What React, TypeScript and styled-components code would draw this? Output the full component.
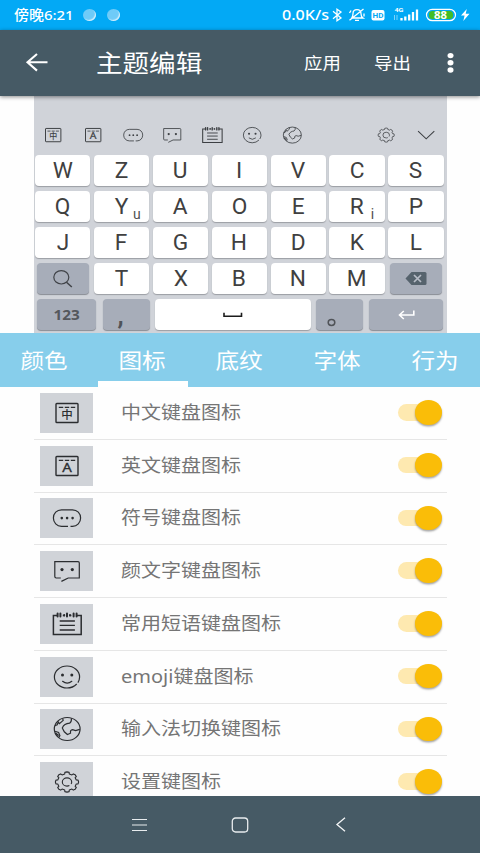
import React from 'react';
import styled, { createGlobalStyle } from 'styled-components';

const GlobalStyle = createGlobalStyle`
  * {
    box-sizing: border-box;
  }
  body {
    margin: 0;
    background: #ffffff;
    font-family: 'Noto Sans', 'Noto Sans CJK SC', sans-serif;
  }
`;

const Screen = styled.div`
  width: 480px;
  height: 853px;
  display: flex;
  flex-direction: column;
  overflow: hidden;
  background: #fefefe;
`;

// wide text: most of this screen uses a 9/8 horizontal stretch
const Wide = styled.span<{ $size: number; $origin?: string; $weight?: number; $scale?: number }>`
  display: block;
  white-space: nowrap;
  font-size: ${({ $size }) => $size}px;
  font-weight: ${({ $weight }) => $weight ?? 400};
  line-height: 1;
  transform: scaleX(${({ $scale }) => $scale ?? 1.125});
  transform-origin: ${({ $origin }) => $origin ?? 'left'} center;
`;

/* ---------- status bar ---------- */

const StatusBar = styled.div`
  height: 30px;
  flex: none;
  display: flex;
  align-items: center;
  justify-content: space-between;
  padding: 0 10px 0 14px;
  background: #03a9f5;
  color: #ffffff;
`;

const StatusLeft = styled.div`
  display: flex;
  align-items: center;
  gap: 11px;
`;

const Clock = styled.div`
  width: 58px;
  padding-top: 2px;
`;

const Bubble = styled.span`
  width: 13px;
  height: 12px;
  border-radius: 50%;
  background: #6fcbf8;
  box-shadow: inset -1px -1px 1px #d6f0fd;
`;

const StatusRight = styled.div`
  display: flex;
  align-items: center;
`;

const Speed = styled.div`
  width: 48.5px;
  padding-top: 1px;
`;

/* ---------- header ---------- */

const Header = styled.header`
  height: 66px;
  flex: none;
  display: flex;
  align-items: center;
  padding: 0 26px 0 25px;
  background: #465a65;
  color: #ffffff;
  box-shadow: 0 1px 4px rgba(0, 0, 0, 0.45);
  z-index: 1;
`;

const HeaderTitle = styled.div`
  flex: 1;
  margin-left: 48px;
  padding-top: 2px;
`;

const HeaderAction = styled.div`
  width: 69.5px;
`;

/* ---------- keyboard ---------- */

const Keyboard = styled.section`
  width: 413.5px;
  height: 237px;
  flex: none;
  margin-left: 33.5px;
  padding: 20px 2px 0 1.5px;
  background: #d0d3d9;
`;

const Toolbar = styled.div`
  height: 39px;
  display: flex;
  align-items: center;
  padding: 0 7.5px 0 6.8px;
`;

const ToolSlot = styled.div<{ $push?: boolean }>`
  width: 22.4px;
  height: 18.2px;
  margin-right: 17.5px;
  margin-left: ${({ $push }) => ($push ? 'auto' : '0')};
  color: #3c3f43;

  &:last-child {
    margin-right: 0;
  }
`;

const KeyRow = styled.div`
  display: flex;
  gap: 3.6px;
  height: 31px;
  margin-bottom: 5px;
`;

const Key = styled.div<{ $width?: number; $gray?: boolean; $left?: number; $right?: number }>`
  position: relative;
  width: ${({ $width }) => $width ?? 55.3}px;
  margin-left: ${({ $left }) => $left ?? 0}px;
  margin-right: ${({ $right }) => $right ?? 0}px;
  flex: none;
  display: flex;
  align-items: center;
  justify-content: center;
  border-radius: 4px;
  background: ${({ $gray }) => ($gray ? '#a7adb9' : '#ffffff')};
  box-shadow: 0 1px 1px ${({ $gray }) => ($gray ? '#888c94' : '#9b9ea4')};
  color: #404040;
  font-family: Roboto, sans-serif;
`;

const KeyHint = styled.span`
  position: absolute;
  left: 37px;
  bottom: 0;
  width: 12px;
  text-align: center;
  font-size: 14px;
  line-height: 16px;
  color: #505050;
`;

const NumberLabel = styled(Wide)`
  color: #55585d;
  font-family: 'Noto Sans', sans-serif;
`;

const Comma = styled.span`
  position: relative;
  left: -6px;
  top: 1px;
  font-size: 25px;
  font-weight: 700;
  line-height: 1;
  color: #505358;
`;

/* ---------- tabs ---------- */

const Tabs = styled.nav`
  width: 488px;
  height: 54px;
  flex: none;
  display: grid;
  grid-template-columns: repeat(5, 1fr);
  margin-left: -4.5px;
  background: #87ceeb;
  color: #ffffff;
`;

const Tab = styled.div<{ $active?: boolean }>`
  display: flex;
  align-items: center;
  justify-content: center;
  position: relative;

  &::after {
    content: '';
    display: ${({ $active }) => ($active ? 'block' : 'none')};
    position: absolute;
    left: 4.9px;
    bottom: 0;
    width: 90px;
    height: 6px;
    background: #ffffff;
  }
`;

/* ---------- list ---------- */

const List = styled.main`
  flex: 1;
  min-height: 0;
  overflow: hidden;
  padding: 0 33.5px;
`;

const Row = styled.div`
  height: 52.75px;
  display: flex;
  align-items: center;
  padding: 0 4.5px 0 6.5px;
  border-bottom: 1px solid #e6e6e6;
`;

const Chip = styled.div`
  width: 53.3px;
  height: 40px;
  display: flex;
  align-items: center;
  justify-content: center;
  background: #d0d3d8;
  color: #2b2d30;
`;

const Glyph = styled.svg`
  display: block;
  width: 100%;
  height: 100%;
  fill: none;
  stroke: currentColor;
`;

const GlyphBox = styled.div`
  width: 32px;
  height: 26px;
`;

const RowLabel = styled.div`
  flex: 1;
  margin-left: 28.2px;
  color: #757575;
`;

const Switch = styled.div`
  width: 43.7px;
  height: 25px;
  display: flex;
  align-items: center;
  margin-bottom: 1px;
`;

const Track = styled.div`
  width: 36px;
  height: 16.5px;
  border-radius: 9px;
  background: #fee9b0;
`;

const Thumb = styled.div`
  width: 26.6px;
  height: 24.5px;
  margin-left: -19px;
  flex: none;
  border-radius: 50%;
  background: #fabd08;
  box-shadow: 0 1.5px 2px rgba(0, 0, 0, 0.35);
`;

/* ---------- system navigation ---------- */

const NavBar = styled.footer`
  height: 57px;
  flex: none;
  display: flex;
  align-items: center;
  justify-content: center;
  gap: 84px;
  padding-right: 1px;
  background: #465a65;
`;

type IconName = 'chinese' | 'english' | 'symbol' | 'kaomoji' | 'phrase' | 'emoji' | 'globe' | 'gear' | 'down';

const gearPath = () => {
  const steps: string[] = [];
  for (let i = 0; i < 8; i++) {
    const base = (i * Math.PI) / 4;
    [
      [-0.24, 0.83],
      [-0.19, 0.98],
      [0, 1.01],
      [0.19, 0.98],
      [0.24, 0.83],
    ].forEach(([a, r]) => {
      const x = 16 + Math.sin(base + a) * r * 11.5;
      const y = 13 - Math.cos(base + a) * r * 10;
      steps.push(`${x.toFixed(2)} ${y.toFixed(2)}`);
    });
  }
  return `M${steps.join('L')}Z`;
};

const Icon: React.FC<{ name: IconName }> = ({ name }) => (
  <Glyph viewBox="0 0 32 26" strokeWidth="1.2">
    {(name === 'chinese' || name === 'english') && (
      <>
        <rect x="5" y="3.5" width="22" height="19" rx="0.8" strokeWidth="1.4" />
        <path d="M7.8 7.3h4.4M13.8 7.3h4.4M19.8 7.3h4.4" />
      </>
    )}
    {name === 'chinese' && (
      <text
        x="16"
        y="18.5"
        textAnchor="middle"
        fontSize="11.5"
        fontWeight="500"
        fontFamily="'Noto Sans CJK SC', sans-serif"
        fill="currentColor"
        stroke="none"
      >
        中
      </text>
    )}
    {name === 'english' && (
      <text
        x="13.3"
        y="19.2"
        textAnchor="middle"
        fontSize="12.5"
        fontFamily="'Noto Sans', sans-serif"
        fill="currentColor"
        stroke="currentColor"
        strokeWidth="0.3"
        transform="scale(1.2 1)"
      >
        A
      </text>
    )}
    {name === 'symbol' && (
      <>
        <path d="M17 21.3H10.5C5.8 21.3 2.4 17.6 2.4 13S5.8 4.8 10.5 4.8h11c4.7 0 8.1 3.6 8.1 8.2s-3.4 8.3-8.1 8.3h-2" />
        <g fill="currentColor" stroke="none">
          <circle cx="10.8" cy="13.1" r="1.3" />
          <circle cx="16.1" cy="13.1" r="1.3" />
          <circle cx="21.6" cy="13.1" r="1.3" />
        </g>
      </>
    )}
    {name === 'kaomoji' && (
      <>
        <path d="M9.8 20H5.2q-1.4 0-1.4-1.4V3.6H27q1.3 0 1.3 1.4v15H17.2L10.4 23.4" />
        <g fill="currentColor" stroke="none">
          <circle cx="11" cy="11.6" r="1.6" />
          <circle cx="21.3" cy="11.6" r="1.6" />
        </g>
      </>
    )}
    {name === 'phrase' && (
      <>
        <path strokeWidth="1.5" d="M6.8 4.4H2.4V23.6H30.2V4.4H25.7M11.8 4.4h2M18.4 4.4h2" />
        <path strokeWidth="2" strokeLinecap="round" d="M9.4 2.6v3M13.2 4v.4M16 2.6v3M19 4v.4M22.6 2.6v3M6.6 2.6v3M25.6 2.6v3" />
        <path strokeWidth="1.3" d="M8.7 10h15.2M8.7 14.4h15.2M8.7 19h15.2" />
      </>
    )}
    {name === 'emoji' && (
      <>
        <ellipse cx="16" cy="13" rx="12.6" ry="11" pathLength="100" strokeDasharray="8 2.5 89.5 0" />
        <path strokeLinecap="round" d="M11.6 17.3q4.6 3.8 9.2 0" />
        <g fill="currentColor" stroke="none">
          <circle cx="11.5" cy="11" r="1.5" />
          <circle cx="20.8" cy="11" r="1.5" />
        </g>
      </>
    )}
    {name === 'globe' && (
      <>
        <ellipse cx="16.2" cy="13" rx="12.9" ry="11.5" />
        <path d="M20.4 2.2Q20.8 5.6 18.6 7.2C15.5 7.4 12.5 9 11.3 11.9L13.3 15.8 16.4 18.5 19.5 17.2Q19 13.9 21.6 13.7L24.6 14.6 28.8 13.4" />
        <path d="M6.6 5.2 8.4 7.6 12.2 4.4 11.6 2.4M3.8 9.8 6.2 8.8 7.2 6.2M4 15.2 7.6 16.4 8.9 19.6 7.8 21.4" />
        <path strokeWidth="1.6" d="M4.4 17 7.6 19.6" />
      </>
    )}
    {name === 'gear' && (
      <>
        <path strokeWidth="1.1" strokeLinejoin="round" d={gearPath()} />
        <ellipse cx="16" cy="13" rx="4.7" ry="4.1" strokeWidth="1.1" pathLength="100" strokeDasharray="8 8 84 0" />
      </>
    )}
    {name === 'down' && <path strokeWidth="1.5" d="M4.4 7.4 16 18.4 27.6 7.4" />}
  </Glyph>
);

const letterRows = ['WZUIVCS', 'QYAOERP', 'JFGHDKL'];
const hints: Record<string, string> = { Y: 'u', R: 'i' };
const tools: IconName[] = ['chinese', 'english', 'symbol', 'kaomoji', 'phrase', 'emoji', 'globe'];
const tabs = ['颜色', '图标', '底纹', '字体', '行为'];

const items: { icon: IconName; label: string }[] = [
  { icon: 'chinese', label: '中文键盘图标' },
  { icon: 'english', label: '英文键盘图标' },
  { icon: 'symbol', label: '符号键盘图标' },
  { icon: 'kaomoji', label: '颜文字键盘图标' },
  { icon: 'phrase', label: '常用短语键盘图标' },
  { icon: 'emoji', label: 'emoji键盘图标' },
  { icon: 'globe', label: '输入法切换键图标' },
  { icon: 'gear', label: '设置键图标' },
];

const LetterKey: React.FC<{ letter: string }> = ({ letter }) => (
  <Key>
    <Wide $size={22} $origin="center" $scale={1.03}>
      {letter}
    </Wide>
    {hints[letter] && <KeyHint>{hints[letter]}</KeyHint>}
  </Key>
);

const StatusIcons: React.FC = () => (
  <svg width="140" height="20" viewBox="330 5 140 20" fill="none" stroke="#fff">
    <path strokeWidth="1.3" d="M333 11.3 341 18 337 20.8V9.2L341 12 333 18.7" />
    <path
      strokeWidth="1.3"
      d="M351.5 18H363c-1.6-1-2-2.2-2-4.3 0-2.6-1.5-4-4-4s-4 1.4-4 4c0 2-.3 3.3-1.5 4.3M355 20.3h4M349.5 20.3 363.5 9M349.5 13l1.5-2.5M364 13.500v3"
    />
    <rect x="371.5" y="10" width="13" height="10.5" rx="2" fill="#fff" stroke="none" />
    <text x="378" y="18.3" textAnchor="middle" fontSize="8" fontWeight="700" fontFamily="Roboto, sans-serif" fill="#03a9f5" stroke="none">
      HD
    </text>
    <text
      x="394.5"
      y="12"
      fontSize="6"
      fontWeight="700"
      fontFamily="Roboto, sans-serif"
      fill="#fff"
      stroke="none"
      textLength="9"
      lengthAdjust="spacingAndGlyphs"
    >
      4G
    </text>
    <path strokeWidth="0.7" opacity="0.7" d="M394.5 15v5M397 15v5" />
    <path strokeWidth="2.3" d="M401.5 18v2.5M405.3 16.5v4M409.2 14.5v6M413 12v8.5M417 9.5v11" />
    <rect x="426.5" y="9.3" width="29" height="11.4" rx="5.7" strokeWidth="1.2" />
    <rect x="429" y="11" width="24" height="8" rx="3.5" fill="#42bd26" stroke="none" />
    <text
      x="440.5"
      y="18.5"
      textAnchor="middle"
      fontSize="10"
      fontWeight="700"
      fontFamily="'Noto Sans', sans-serif"
      fill="#fff"
      stroke="none"
      textLength="13"
      lengthAdjust="spacingAndGlyphs"
    >
      88
    </text>
    <path fill="#fff" stroke="none" d="M466.8 9 461 15.600h3.600L463.300 21 469.500 13.800h-3.800z" />
  </svg>
);

const App: React.FC = () => (
  <>
    <GlobalStyle />
    <Screen>
      <StatusBar>
        <StatusLeft>
          <Clock>
            <Wide $size={13.3} $weight={500}>
              傍晚6:21
            </Wide>
          </Clock>
          <Bubble />
          <Bubble />
        </StatusLeft>
        <StatusRight>
          <Speed>
            <Wide $size={14.3} $weight={500}>
              0.0K/s
            </Wide>
          </Speed>
          <StatusIcons />
        </StatusRight>
      </StatusBar>

      <Header>
        <svg width="23" height="20" viewBox="0 0 23 20" fill="none" stroke="#fff" strokeWidth="2.1">
          <path d="M22.500 9.300H2.500M12 1 2.500 9.300l9.500 8.300" />
        </svg>
        <HeaderTitle>
          <Wide $size={23.6}>主题编辑</Wide>
        </HeaderTitle>
        <HeaderAction>
          <Wide $size={16.4}>应用</Wide>
        </HeaderAction>
        <HeaderAction>
          <Wide $size={16.4}>导出</Wide>
        </HeaderAction>
        <svg width="11" height="22" viewBox="0 0 11 22" fill="#fff">
          <ellipse cx="7.5" cy="3.6" rx="3" ry="2.7" />
          <ellipse cx="7.5" cy="10.8" rx="3" ry="2.7" />
          <ellipse cx="7.5" cy="18" rx="3" ry="2.7" />
        </svg>
      </Header>

      <Keyboard>
        <Toolbar>
          {tools.map((name) => (
            <ToolSlot key={name}>
              <Icon name={name} />
            </ToolSlot>
          ))}
          <ToolSlot $push>
            <Icon name="gear" />
          </ToolSlot>
          <ToolSlot>
            <Icon name="down" />
          </ToolSlot>
        </Toolbar>
        {letterRows.map((row) => (
          <KeyRow key={row}>
            {row.split('').map((letter) => (
              <LetterKey key={letter} letter={letter} />
            ))}
          </KeyRow>
        ))}
        <KeyRow>
          <Key $gray $width={51.8} $left={1.8} $right={1.7}>
            <svg width="20" height="18" viewBox="0 0 20 18" fill="none" stroke="#404348" strokeWidth="1.2">
              <ellipse cx="8.3" cy="7.3" rx="7.5" ry="6.7" />
              <path d="M13.5 12.3 18.8 17" strokeWidth="1.5" />
            </svg>
          </Key>
          {'TXBNM'.split('').map((letter) => (
            <LetterKey key={letter} letter={letter} />
          ))}
          <Key $gray $width={52} $left={1.8}>
            <svg width="22" height="13" viewBox="0 0 22 13">
              <path d="M6.5 0H20q1.5 0 1.5 1.5v10q0 1.5-1.5 1.5H6.5L.5 6.5z" fill="#56636d" />
              <path d="M9 3 16 10M16 3 9 10" stroke="#b7bdc7" strokeWidth="1.7" />
            </svg>
          </Key>
        </KeyRow>
        <KeyRow>
          <Key $gray $width={59.7} $left={1.8} $right={3.2}>
            <NumberLabel $size={13.6} $origin="center" $weight={700}>
              123
            </NumberLabel>
          </Key>
          <Key $gray $width={46.7} $right={1.2}>
            <Comma>,</Comma>
          </Key>
          <Key $width={156.5} $right={1.3}>
            <svg width="20" height="6" viewBox="0 0 20 6" fill="none" stroke="#1c1c1c" strokeWidth="1.6">
              <path d="M1 .8v3.400h17.500V.8" />
            </svg>
          </Key>
          <Key $gray $width={46.7} $right={3}>
            <svg width="46" height="31" viewBox="0 0 46 31" fill="none" stroke="#505358" strokeWidth="1.5">
              <ellipse cx="15.5" cy="23.5" rx="3.3" ry="2.9" />
            </svg>
          </Key>
          <Key $gray $width={74}>
            <svg width="17" height="10" viewBox="0 0 17 10" fill="none" stroke="#fff" strokeWidth="1.6">
              <path d="M15.800.5V5H1.500M5.800 1 1.500 5l4.300 4" />
            </svg>
          </Key>
        </KeyRow>
      </Keyboard>

      <Tabs>
        {tabs.map((tab) => (
          <Tab key={tab} $active={tab === '图标'}>
            <Wide $size={21} $origin="center">
              {tab}
            </Wide>
          </Tab>
        ))}
      </Tabs>

      <List>
        {items.map(({ icon, label }) => (
          <Row key={label}>
            <Chip>
              <GlyphBox>
                <Icon name={icon} />
              </GlyphBox>
            </Chip>
            <RowLabel>
              <Wide $size={17.8}>{label}</Wide>
            </RowLabel>
            <Switch>
              <Track />
              <Thumb />
            </Switch>
          </Row>
        ))}
      </List>

      <NavBar>
        <svg width="15" height="14" viewBox="0 0 15 14" fill="none" stroke="#e8ecee" strokeWidth="1.2">
          <path d="M0 1.500h15M0 7h15M0 12.500h15" />
        </svg>
        <svg width="18" height="16" viewBox="0 0 18 16" fill="none" stroke="#e8ecee" strokeWidth="1.3">
          <rect x="1.300" y="1" width="15.4" height="14" rx="3.2" />
        </svg>
        <svg width="14" height="15" viewBox="0 0 14 15" fill="none" stroke="#f4f6f7" strokeWidth="1.3">
          <path d="M12 .8 4 7.500l8 6.700" />
        </svg>
      </NavBar>
    </Screen>
  </>
);

export default App;
